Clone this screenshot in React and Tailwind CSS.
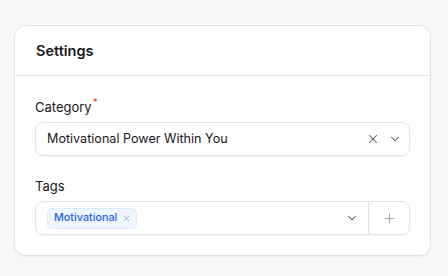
import { X, ChevronDown, Plus } from 'lucide-react'

export default function App() {
  return (
    <div className="min-h-screen bg-[#f7f7f7] px-[14px] pt-[25px] pb-5" style={{ fontFamily: 'Inter, "Noto Sans", sans-serif' }}>
      <div className="w-[417px] bg-white border border-[#e4e4e7] rounded-[12px] shadow-[0_1px_2px_rgba(0,0,0,0.05)]">
        {/* Header */}
        <div className="h-[50px] flex items-center px-[21px] border-b border-[#e4e4e7]">
          <h2 className="text-[14.5px] font-semibold text-[#18181b]">Settings</h2>
        </div>

        {/* Body */}
        <div className="px-[20px] pt-[21px] pb-[20px] flex flex-col gap-[20px]">
          <div className="flex flex-col gap-[5px]">
            <label className="text-[13px] leading-5 text-[#18181b] flex items-start">
              Category<span className="text-[#ef4444] text-[10px] leading-3 ml-[1px] -mt-[1px]">*</span>
            </label>
            <div className="h-[34px] flex items-center border border-[#e4e4e7] rounded-[8px] shadow-[0_1px_2px_rgba(0,0,0,0.06)] pl-[11px] pr-[7px]">
              <span className="flex-1 text-[12.6px] text-[#18181b]">Motivational Power Within You</span>
              <X size={14} strokeWidth={1.8} className="text-[#52525b] mr-[8px]" />
              <ChevronDown size={14} strokeWidth={1.8} className="text-[#52525b]" />
            </div>
          </div>

          <div className="flex flex-col gap-[5px]">
            <label className="text-[13px] leading-5 text-[#18181b]">Tags</label>
            <div className="h-[34px] flex items-stretch border border-[#e4e4e7] rounded-[8px] shadow-[0_1px_2px_rgba(0,0,0,0.06)]">
              <div className="flex-1 flex items-center pl-[11px] pr-[9px]">
                <div className="flex-1 flex">
                  <span className="h-[21px] flex items-center gap-[5px] pl-[6px] pr-[5px] bg-[#eff6ff] border border-[#dbeafe] rounded-[5px] text-[10.8px] font-medium text-[#2563eb]">
                    Motivational
                    <X size={9} strokeWidth={2} className="text-[#8b9bb8]" />
                  </span>
                </div>
                <ChevronDown size={14} strokeWidth={1.8} className="text-[#52525b]" />
              </div>
              <div className="w-[41px] border-l border-[#e4e4e7] flex items-center justify-center">
                <Plus size={15} strokeWidth={1.5} className="text-[#a1a1aa]" />
              </div>
            </div>
          </div>
        </div>
      </div>
    </div>
  )
}
